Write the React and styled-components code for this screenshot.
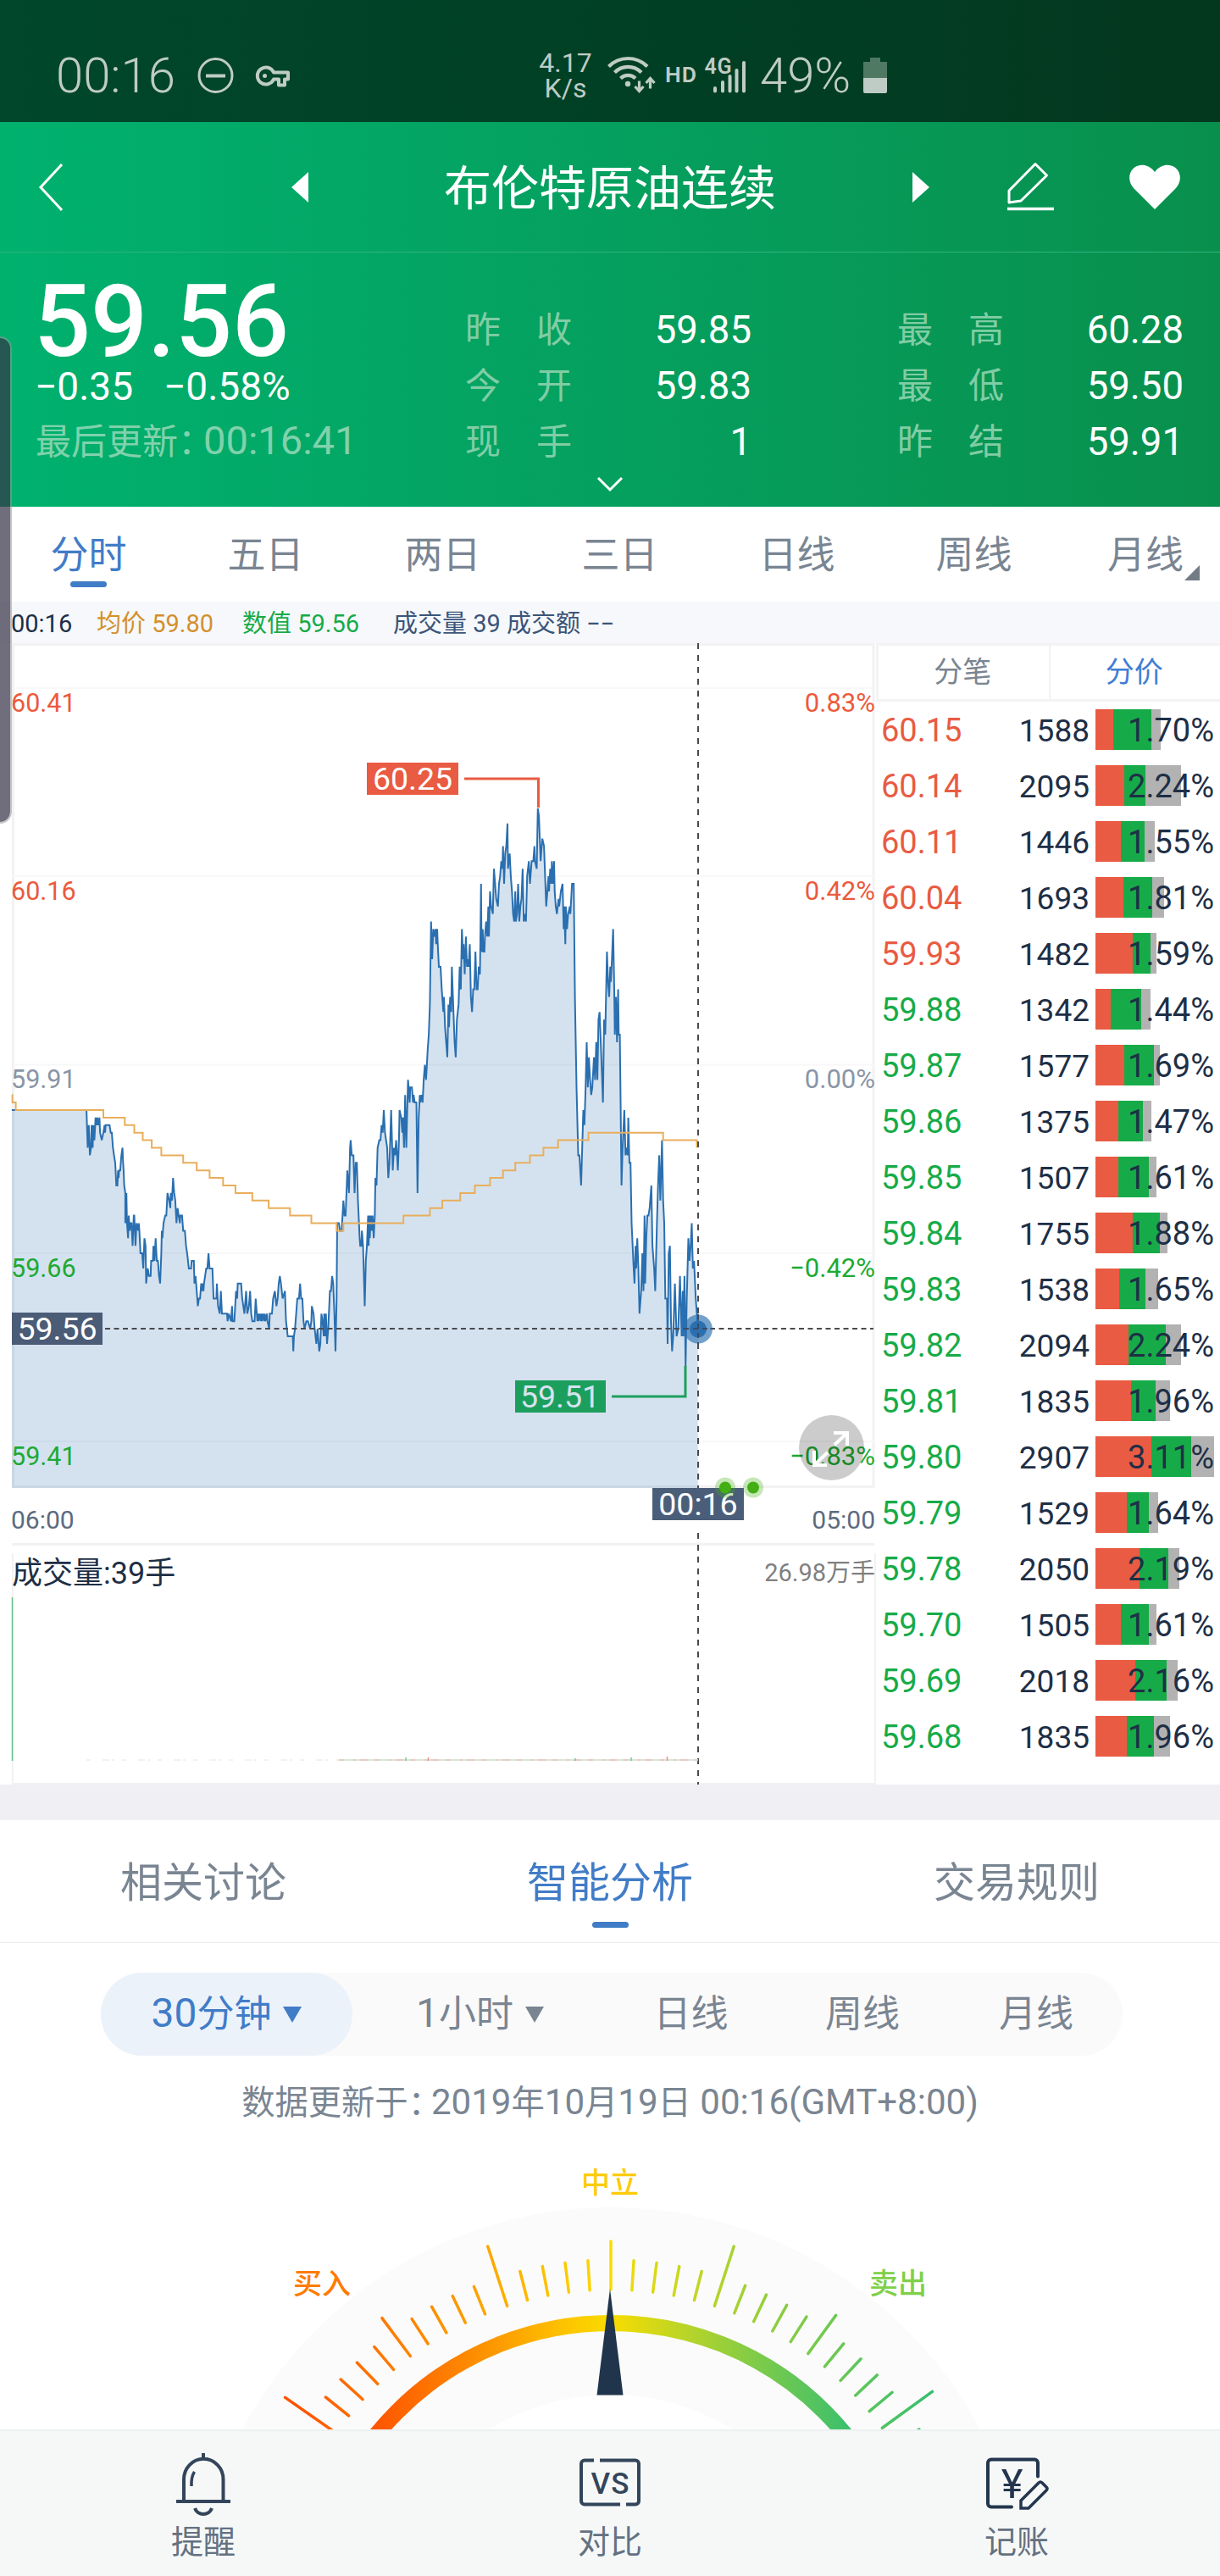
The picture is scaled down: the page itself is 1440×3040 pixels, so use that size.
import React from 'react';
import styled, { createGlobalStyle } from 'styled-components';

const GlobalStyle = createGlobalStyle`
  * {
    box-sizing: border-box;
  }
  body {
    margin: 0;
    background: #ffffff;
    font-family: Roboto, 'Noto Sans CJK SC', sans-serif;
    font-weight: 370;
  }
  svg {
    display: block;
  }
`;

const BLUE = '#417cc7';
const GREY = '#7a8592';
const RED = '#e95b42';
const GREEN = '#16ab48';
const NAVY = '#1e2f46';

const Screen = styled.div`
  position: relative;
  width: 1440px;
  height: 3040px;
  overflow: hidden;
  background: #ffffff;
`;

/* digits stand a little taller than the Chinese text beside them */
const Num = styled.span`
  font-size: ${(p) => p.$scale || 1.09}em;
  line-height: 1;
`;

const Colon = styled.span`
  margin-right: -12px;
`;

/* ---------- status bar ---------- */

const StatusBar = styled.div`
  display: flex;
  align-items: center;
  height: 144px;
  padding: 34px 0 0 66px;
  font-weight: 350;
  color: #bfccc5;
  background: linear-gradient(90deg, #00472c, #013d22 70%, #04371e);
`;

const Clock = styled.div`
  width: 163px;
  font-size: 58px;
  line-height: 60px;
`;

const StatusLeft = styled.div`
  width: 402px;
`;

const Speed = styled.div`
  width: 74px;
  padding-right: 1px;
  font-size: 32px;
  line-height: 30px;
  font-weight: 400;
  text-align: center;
`;

const SpeedLine = styled.div`
  height: 30px;
`;

const StatusRight = styled.div`
  display: flex;
  align-items: center;
`;

const Battery = styled.div`
  width: 122px;
  margin-left: 13px;
  font-size: 58px;
  line-height: 60px;
`;

const EdgeHandle = styled.div`
  position: absolute;
  left: -14px;
  top: 397px;
  width: 28px;
  height: 575px;
  border: 2px solid rgba(150, 150, 150, 0.55);
  border-radius: 16px;
  background: rgba(53, 51, 70, 0.71);
  background-clip: padding-box;
`;

/* ---------- green header ---------- */

const Header = styled.div`
  height: 454px;
  color: #ffffff;
  background: linear-gradient(90deg, #00b16e, #04a463 38%, #089250 92%, #098f4c);
`;

const TitleBar = styled.div`
  display: grid;
  grid-template-columns: 301px 60px 673px 111px 145px 107px;
  align-items: center;
  height: 154px;
  padding-left: 43px;
  border-bottom: 1px solid #2fb37b;
`;

const Title = styled.div`
  padding: 4px 41px 0 0;
  font-size: 56px;
  line-height: 80px;
  text-align: center;
`;

const Quote = styled.div`
  display: flex;
  height: 256px;
  padding: 28px 43px 0;
`;

const QuoteMain = styled.div`
  width: 506px;
`;

const Price = styled.div`
  height: 98px;
  padding-top: 5px;
  margin-left: -3px;
  font-size: 118px;
  line-height: 98px;
  font-weight: 500;
`;

const Change = styled.div`
  display: flex;
  gap: 36px;
  margin-left: -2px;
  font-size: 46px;
  line-height: 65px;
`;

const Updated = styled.div`
  margin-left: -1px;
  font-size: 42px;
  line-height: 66px;
  color: #80d2ac;
`;

const Stats = styled.div`
  width: 338px;
  padding-top: 31px;
  margin-right: ${(p) => (p.$last ? 0 : '172px')};
`;

const Stat = styled.div`
  display: flex;
  justify-content: space-between;
  height: 66px;
  font-size: 45.5px;
  line-height: 66px;
`;

const StatLabel = styled.span`
  display: flex;
  gap: 42px;
  font-size: 42px;
  color: #80cda5;
`;

const Expander = styled.div`
  display: flex;
  justify-content: center;
  padding-top: 8px;
`;

/* ---------- period tabs ---------- */

const Tabs = styled.div`
  display: flex;
  height: 112px;
  overflow: hidden;
  background: #ffffff;
`;

const Tab = styled.div`
  display: flex;
  flex: none;
  flex-direction: column;
  align-items: center;
  width: ${(p) => p.$w || 209}px;
  padding-top: 28px;
  font-size: 45px;
  line-height: 60px;
  color: ${(p) => (p.$active ? BLUE : GREY)};
  font-weight: ${(p) => (p.$active ? 400 : 370)};
`;

const Underline = styled.div`
  width: 43px;
  height: 7px;
  margin-top: ${(p) => p.$gap || 0}px;
  border-radius: 4px;
  background: ${BLUE};
`;

const MoreLabel = styled.span`
  position: relative;

  &:after {
    content: '';
    position: absolute;
    right: -19px;
    bottom: 1px;
    border-left: 18px solid transparent;
    border-bottom: 18px solid #737b84;
  }
`;

const InfoBar = styled.div`
  display: flex;
  height: 49px;
  padding-left: 13px;
  font-size: 29px;
  line-height: 52px;
  white-space: pre;
  background: #f6f8fb;
`;

const Info = styled.span`
  width: ${(p) => p.$w}px;
  color: ${(p) => p.$color};
`;

/* ---------- chart and price list ---------- */

const Market = styled.div`
  display: grid;
  grid-template-columns: 1034px 1fr;
  height: 1347px;
`;

const PriceHead = styled.div`
  display: flex;
  height: 69px;
  border: 3px solid #f3f3f3;
  border-right: none;
`;

const PriceTab = styled.div`
  flex: 1;
  padding-right: 2px;
  font-size: 34px;
  line-height: 63px;
  text-align: center;
  color: ${(p) => (p.$active ? '#3f7ed4' : GREY)};
  border-left: ${(p) => (p.$active ? '2px solid #f3f3f3' : 'none')};
`;

const Row = styled.div`
  display: grid;
  grid-template-columns: 120px 126px 7px 140px;
  align-items: center;
  height: 66px;
  padding-left: 6px;
  font-size: 38px;
  font-weight: 390;
  color: ${NAVY};
`;

const RowPrice = styled.span`
  padding-top: 2px;
  color: ${(p) => (p.$up ? RED : GREEN)};
`;

const RowVolume = styled.span`
  padding-top: 2px;
  font-size: 37px;
  text-align: right;
`;

const Bar = styled.div`
  display: flex;
  grid-column: 4;
  height: 48px;
  position: relative;
`;

const Segment = styled.div`
  background: ${(p) => p.$color};
`;

const Percent = styled.span`
  position: absolute;
  right: 0;
  top: 0;
  line-height: 51px;
`;

const Divider = styled.div`
  height: 42px;
  background: #efeff4;
`;

/* ---------- analysis ---------- */

const SectionTabs = styled.div`
  display: flex;
  height: 145px;
  border-bottom: 1px solid #ececee;
`;

const SectionTab = styled.div`
  display: flex;
  flex: 1;
  flex-direction: column;
  align-items: center;
  padding-top: 40px;
  font-size: 49px;
  line-height: 70px;
  color: ${(p) => (p.$active ? BLUE : GREY)};
  font-weight: ${(p) => (p.$active ? 400 : 370)};
`;

const Pill = styled.div`
  display: flex;
  width: 1206px;
  height: 98px;
  margin: 35px 0 0 119px;
  border-radius: 49px;
  background: #fafafa;
`;

const PillItem = styled.div`
  display: flex;
  align-items: center;
  justify-content: center;
  gap: 14px;
  width: ${(p) => p.$w}px;
  font-size: 44px;
  line-height: 99px;
  border-radius: 49px;
  color: ${(p) => (p.$active ? BLUE : GREY)};
  font-weight: ${(p) => (p.$active ? 400 : 370)};
  background: ${(p) => (p.$active ? '#ebf2fa' : 'transparent')};
`;

const Caret = styled.i`
  border: 11px solid transparent;
  border-top: 19px solid currentColor;
  border-bottom: none;
`;

const Note = styled.div`
  height: 60px;
  margin-top: 25px;
  font-size: 39.3px;
  line-height: 62px;
  text-align: center;
  color: ${GREY};
`;

const GaugeBox = styled.div`
  height: 356px;
  overflow: hidden;
`;

const BottomBar = styled.div`
  display: flex;
  height: 173px;
  border-top: 2px solid #edf1f1;
  background: #f6f8f8;
`;

const Action = styled.div`
  display: flex;
  flex: 1;
  flex-direction: column;
  align-items: center;
  gap: 5px;
  padding-top: 21px;
  font-size: 38px;
  line-height: 50px;
  color: #647180;
`;

/* ---------- data ---------- */

const TABS = ['分时', '五日', '两日', '三日', '日线', '周线'];

const STATS = [
  [['昨收', '59.85'], ['今开', '59.83'], ['现手', '1']],
  [['最高', '60.28'], ['最低', '59.50'], ['昨结', '59.91']],
];

// price, volume, buy width, sell end, total width, share
const PRICES = [
  ['60.15', 1588, 21, 66, 77, '1.70%'],
  ['60.14', 2095, 34, 59, 101, '2.24%'],
  ['60.11', 1446, 30, 58, 70, '1.55%'],
  ['60.04', 1693, 33, 67, 81, '1.81%'],
  ['59.93', 1482, 44, 65, 72, '1.59%'],
  ['59.88', 1342, 18, 54, 65, '1.44%'],
  ['59.87', 1577, 34, 69, 76, '1.69%'],
  ['59.86', 1375, 27, 56, 66, '1.47%'],
  ['59.85', 1507, 27, 63, 72, '1.61%'],
  ['59.84', 1755, 44, 76, 85, '1.88%'],
  ['59.83', 1538, 28, 59, 74, '1.65%'],
  ['59.82', 2094, 39, 83, 101, '2.24%'],
  ['59.81', 1835, 42, 71, 88, '1.96%'],
  ['59.80', 2907, 66, 113, 140, '3.11%'],
  ['59.79', 1529, 37, 63, 74, '1.64%'],
  ['59.78', 2050, 52, 86, 99, '2.19%'],
  ['59.70', 1505, 30, 63, 72, '1.61%'],
  ['59.69', 2018, 47, 84, 97, '2.16%'],
  ['59.68', 1835, 37, 69, 88, '1.96%'],
];

// time slot, cents above 59.00
const TICKS = `21 85 154 85 156 80 158 83 160 79 162 80 163 83 165 80 166 83 168 81 170 84 172 83 173 84
175 83 177 84 178 82 181 81 184 82 186 83 187 82 188 83 195 83 197 82 199 82 201 80 203 79 205 78 207 75
209 75 210 77 211 76 212 77 214 77 216 79 218 80 219 78 220 77 221 75 223 74 223 70 225 74 226 70 228 68
229 71 231 69 232 70 234 70 236 67 238 71 239 71 241 67 243 70 246 69 247 70 248 69 250 66 253 66 255 64
257 68 259 67 260 62 263 64 265 63 268 63 269 65 272 65 273 67 275 65 277 68 279 65 281 65 283 63 285 62
287 66 288 69 289 68 291 70 294 71 296 71 298 74 301 73 303 72 304 74 306 73 308 76 310 74 312 73 314 70
316 72 318 71 320 70 321 71 324 71 326 69 329 69 331 67 333 66 336 64 340 64 341 65 345 65 346 62 348 63
350 61 352 59 354 60 356 60 358 62 360 61 361 62 362 61 363 62 365 63 367 64 369 64 371 66 373 64 378 64
380 60 385 60 386 62 388 59 391 58 393 61 395 58 404 58 405 57 407 58 411 57 413 59 414 57 417 57 420 61
422 60 423 62 426 62 429 62 431 60 433 59 435 58 438 61 440 58 443 59 445 61 447 58 449 57 453 57 455 60
458 57 459 58 460 57 462 58 464 57 465 58 466 57 468 58 470 57 471 58 472 57 475 58 476 57 479 56 480 58
484 58 486 60 489 61 492 59 494 60 496 62 498 63 500 62 503 60 507 61 509 57 512 55 521 55 522 53 523 55
525 56 527 58 529 60 532 60 534 62 536 60 538 60 540 57 542 56 545 57 548 57 552 56 554 57 555 59 558 58
560 56 563 54 565 56 568 53 570 54 572 58 574 57 576 55 577 58 579 55 580 58 582 54 584 56 587 61 589 61
591 63 593 62 595 58 597 53 599 60 600 70 603 70 605 69 608 69 611 73 613 71 615 71 617 75 618 77 621 74
623 80 624 81 626 79 629 79 631 74 633 78 635 78 637 73 640 68 641 67 643 67 644 69 646 67 649 59 651 65
653 67 655 71 656 67 657 71 658 68 660 71 662 69 663 71 665 68 667 71 668 76 670 75 672 80 675 81 677 81
679 83 681 82 683 85 685 82 687 81 689 80 691 76 693 78 696 85 699 77 701 80 703 79 705 81 708 77 710 81
711 85 714 84 716 82 717 84 719 80 721 87 723 80 725 86 726 89 729 86 730 88 733 88 735 86 736 87 738 86
741 86 743 74 745 84 747 87 748 86 750 87 752 86 754 89 756 91 758 89 759 90 761 93 763 95 765 99 767 110
769 105 771 109 773 108 775 109 776 107 778 109 779 107 781 104 784 104 786 101 789 98 790 100 792 96
796 92 798 99 799 96 801 100 803 98 804 104 806 100 808 96 809 94 811 92 813 97 816 99 818 104 820 101
822 109 824 105 825 107 827 103 829 108 831 104 832 105 834 104 836 107 838 100 840 98 842 101 844 101
846 106 848 101 850 101 852 104 854 103 856 115 857 106 859 109 860 106 862 106 863 108 865 110 867 108
869 112 870 108 872 114 874 112 877 111 879 117 881 115 883 113 886 112 888 115 890 116 892 118 894 117
895 120 897 115 899 119 901 120 903 123 904 117 907 119 909 116 911 114 913 111 915 110 917 114 918 110
920 111 922 115 924 110 926 112 928 113 930 117 932 110 934 111 936 110 938 116 941 118 943 115 946 118
949 118 951 120 952 118 955 117 957 125 959 124 962 118 965 121 968 120 970 116 972 112 974 114 976 116
977 114 979 117 981 115 982 118 984 115 986 118 987 114 989 112 991 111 994 113 995 112 998 114 1001 115
1003 109 1004 112 1006 107 1007 112 1009 109 1011 111 1014 112 1015 111 1018 115 1021 115 1023 100
1026 88 1029 79 1031 79 1034 75 1036 80 1038 85 1040 83 1042 88 1044 94 1046 88 1048 92 1050 89 1052 87
1054 88 1057 92 1059 89 1061 94 1063 89 1065 97 1067 98 1069 94 1071 90 1073 86 1075 97 1077 95 1080 106
1082 102 1084 100 1086 104 1087 102 1089 105 1091 109 1093 101 1094 95 1096 100 1098 94 1100 101 1101 95
1103 95 1104 88 1106 75 1108 80 1111 85 1113 79 1115 80 1117 79 1118 84 1120 78 1122 78 1124 70 1127 65
1129 62 1131 67 1132 64 1134 68 1136 64 1138 58 1141 61 1143 66 1145 61 1147 71 1148 62 1150 68 1152 71
1154 71 1156 72 1159 75 1161 67 1164 64 1166 61 1169 70 1171 75 1173 79 1175 73 1178 81 1180 73 1182 70
1184 60 1187 60 1188 54 1190 66 1192 67 1194 57 1196 53 1198 55 1201 62 1204 55 1207 56 1210 63 1213 55
1215 61 1216 55 1218 63 1220 51 1222 60 1225 68 1227 65 1229 67 1231 70 1233 64 1235 65 1238 60 1240 58
1242 56`;

// the average only moves one cent at a time: slot where it reaches the value
const AVERAGE = `21 87 22 86 28 85 184 84 222 83 239 82 254 81 270 80 287 79 326 78 350 77 373 76 397 75
419 74 449 73 478 72 516 71 554 70 599 69 611 70 718 71 765 72 787 73 819 74 845 75 872 76 895 77 917 78
943 79 967 80 993 81 1047 82 1180 81 1240 80`;

const AXIS = [
  [53, '60.41', '0.83%', '#ec5a3c'],
  [275, '60.16', '0.42%', '#ec5a3c'],
  [497.5, '59.91', '0.00%', '#8a95a6'],
  [720, '59.66', '−0.42%', '#1daa32'],
  [942, '59.41', '−0.83%', '#1daa32'],
];

const pairs = (text) => {
  const n = text.split(/\s+/).map(Number);
  return n.filter((_, i) => i % 2 === 0).map((x, i) => [x, n[i * 2 + 1]]);
};

const px = (slot) => (slot * 0.6633).toFixed(1);
const py = (cents) => (551 + (85 - cents) * 8.9).toFixed(1);

const priceLine = pairs(TICKS).map(([s, c]) => `${px(s)},${py(c)}`).join(' L');
const averageLine = pairs(AVERAGE)
  .map(([s, c], i) => (i ? `H${px(s)} V${py(c)}` : `M${px(s)},${py(c)}`))
  .join(' ');

/* ---------- icons ---------- */

const StatusIcons = () => (
  <svg width="114" height="60" viewBox="229 57 114 60" fill="none" stroke="#bfccc5">
    <circle cx="254.5" cy="87" r="19.5" strokeWidth="3" />
    <path d="M243 87.5h23" strokeWidth="4" />
    <path
      d="M323 83.500h17v8h-4v7h-7v-7h-6a10 10 0 1 1 0-8z"
      strokeWidth="4"
      strokeLinejoin="round"
    />
    <circle cx="312.500" cy="87.500" r="2.500" fill="#bfccc5" stroke="none" />
  </svg>
);

const SignalIcons = () => (
  <svg width="179" height="60" viewBox="705 57 179 60" fill="none" stroke="#bfccc5">
    <g strokeWidth="4.200">
      <path d="M718.500 76.500a32 32 0 0 1 45.500 0" />
      <path d="M725.500 83.500a22 22 0 0 1 31.500 0" />
      <path d="M732.500 90.500a12.500 12.500 0 0 1 17.500 0" />
    </g>
    <circle cx="741" cy="97" r="3.200" fill="#bfccc5" stroke="none" />
    <path d="M754.500 93.500v11M749.500 100l5 5.500 5-5.500M767.500 102.500v-11M762.500 96l5-5.500 5 5.500" strokeWidth="3.200" />
    <g fill="#bfccc5" stroke="none" fontFamily="Roboto" fontWeight="600">
      <text x="785" y="94.500" fontSize="26.500" textLength="37">HD</text>
      <text x="831.500" y="84.500" fontSize="25" textLength="32">4G</text>
      <rect x="842" y="100" width="4" height="7.500" rx="2" />
      <rect x="851" y="93" width="4" height="14.500" rx="2" />
      <rect x="859.500" y="86" width="4" height="21.500" rx="2" />
      <rect x="867.500" y="79" width="4" height="28.500" rx="2" />
      <rect x="876" y="70" width="4" height="37.500" rx="2" />
    </g>
  </svg>
);

const BatteryIcon = () => (
  <svg width="28" height="44" viewBox="0 0 28 44">
    <path d="M8 6V1h12v5h8v20H0V6z" fill="#4f7963" />
    <path d="M0 25h28v16a2 2 0 0 1-2 2H2a2 2 0 0 1-2-2z" fill="#bfccc5" />
  </svg>
);

const BackIcon = () => (
  <svg width="32" height="60" viewBox="0 0 32 60" fill="none" stroke="#fff" strokeWidth="3">
    <path d="M30 3L5 30l25 27" />
  </svg>
);

const PrevIcon = () => (
  <svg width="20" height="36" viewBox="0 0 20 36">
    <path d="M20 0v36L0 18z" fill="#fff" />
  </svg>
);

const NextIcon = () => (
  <svg width="20" height="36" viewBox="0 0 20 36">
    <path d="M0 0v36l20-18z" fill="#fff" />
  </svg>
);

const PencilIcon = () => (
  <svg width="60" height="60" viewBox="0 0 60 60" fill="none" stroke="#fff" strokeWidth="3">
    <path d="M3 34L34 2.500L47.500 16L17 46L3 48z" strokeLinejoin="round" />
    <path d="M1 55.500h55" strokeWidth="3.500" />
  </svg>
);

const HeartIcon = () => (
  <svg width="60" height="54" viewBox="0 0 60 54">
    <path
      d="M30 53L5 28C-2 20-1 10 5 4.500C12-1.500 23-.500 30 9C37-.500 48-1.500 55 4.500C61 10 62 20 55 28z"
      fill="#fff"
    />
  </svg>
);

const BellIcon = () => (
  <svg width="74" height="80" viewBox="203 2890 74 80" fill="none" stroke="#33455a" strokeWidth="4">
    <path d="M240 2895v6M217 2951v-25a23 24 0 0 1 46.500 0v25" />
    <path d="M208 2952h64M230 2960a10.500 10 0 0 0 20 0" />
    <path d="M229.500 2917q-4 6-3.500 17" strokeWidth="3.500" />
  </svg>
);

const VersusIcon = () => (
  <svg width="80" height="80" viewBox="680 2890 80 80" fill="none" stroke="#33455a" strokeWidth="4">
    <path d="M701 2903.500h-11a4 4 0 0 0-4 4v44a4 4 0 0 0 4 4h42M708 2903.500h42a4 4 0 0 1 4 4v44a4 4 0 0 1-4 4h-11" />
    <text
      x="697.500"
      y="2943"
      fontFamily="Roboto"
      fontSize="35"
      fontWeight="500"
      fill="#33455a"
      stroke="none"
      textLength="45"
    >
      VS
    </text>
  </svg>
);

const LedgerIcon = () => (
  <svg width="84" height="80" viewBox="1158 2890 84 80" fill="none" stroke="#23364e" strokeWidth="4" strokeLinecap="round">
    <path d="M1194 2958.500h-24a4 4 0 0 1-4-4v-48a4 4 0 0 1 4-4h51a4 4 0 0 1 4 4v16" />
    <path d="M1205 2960v-9l21-21q2-2 4 0l5 5q2 2 0 4l-21 21z" strokeWidth="3.500" />
    <text x="1194.500" y="2948" fontFamily="Roboto" fontSize="49" fontWeight="430" fill="#23364e" stroke="none" textAnchor="middle">
      ¥
    </text>
  </svg>
);

/* ---------- chart ---------- */

const Chart = () => (
  <svg width="1034" height="1347" viewBox="0 0 1034 1347" fontFamily="Roboto, 'Noto Sans CJK SC', sans-serif">
    <g fill="none" stroke="#f2f2f2" strokeWidth="3">
      <path d="M15.500 995.500V1.500H1031V995.500z" />
      <path d="M14 1063.500H1032" />
      <path d="M15 1074V1346H1033V1074" strokeWidth="2" />
    </g>
    {AXIS.map(([y]) => (
      <path key={y} d={`M15 ${y}H1032`} stroke="#f8f8f9" strokeWidth="2" />
    ))}

    <path d={`M14,997 L14,551 L${priceLine} V997z`} fill="#2a6fb0" fillOpacity="0.2" />
    <path d={`M${priceLine}`} fill="none" stroke="#2a6fb0" strokeWidth="2" />
    <path d={averageLine} fill="none" stroke="#e9ae5c" strokeWidth="2" />

    {AXIS.map(([y, left, right, color]) => (
      <g key={left} fill={color} fontSize="30.500">
        <text x="13" y={y + 27.5}>{left}</text>
        <text x="1033" y={y + 27.5} textAnchor="end" fontSize="31">{right}</text>
      </g>
    ))}

    <g fill="none" stroke="#4a4a4e" strokeWidth="2">
      <path d="M824 0V997" strokeDasharray="7 7" />
      <path d="M824 1050V1347" strokeDasharray="7 7" />
      <path d="M124 809H1031" strokeDasharray="6 4.500" />
    </g>

    <path d="M548 160H635.500V194" fill="none" stroke={RED} strokeWidth="3" />
    <rect x="433" y="141" width="108" height="38" fill={RED} />
    <path d="M722 889H809V853" fill="none" stroke="#1c9f5d" strokeWidth="3" />
    <rect x="608" y="870" width="107" height="38" fill="#1c9f5d" />
    <rect x="14" y="790" width="107" height="38" fill="#4b5c77" />
    <rect x="770" y="997" width="108" height="38" fill="#4b5e79" />
    <g fontSize="37.500" textAnchor="middle" fill="#fff">
      <text x="487" y="173">60.25</text>
      <text x="661" y="902" fill="#d5e3ee">59.51</text>
      <text x="67.500" y="822">59.56</text>
      <text x="824" y="1029">00:16</text>
    </g>

    <circle cx="824" cy="809.500" r="17" fill="#2a6fb0" fillOpacity="0.65" />
    <circle cx="824" cy="809.500" r="10" fill="#2a6fb0" />
    <path d="M824 792V828M807 809H841" stroke="#3c4c60" strokeWidth="2" strokeDasharray="6 5" />

    {[856, 889].map((x) => (
      <g key={x} fill="#43af14">
        <circle cx={x} cy="996.500" r="12" fillOpacity="0.3" />
        <circle cx={x} cy="996.500" r="7" />
      </g>
    ))}

    <circle cx="981.500" cy="949.500" r="38.500" fill="#000" fillOpacity="0.2" />
    <path
      d="M985 946L999 933M984 932H1000V947M977 955L962 969M961 953V970H976"
      fill="none"
      stroke="#fff"
      strokeWidth="4"
    />

    <g fill="#5c6b80" fontSize="30">
      <text x="13" y="1045">06:00</text>
      <text x="1033" y="1045" textAnchor="end">05:00</text>
    </g>
    <text x="14" y="1110" fontSize="36" fill={NAVY}>成交量:39手</text>
    <text x="1033" y="1107" fontSize="29" fill="#808080" textAnchor="end">26.98万手</text>

    <path d="M14.500 1126V1319" stroke="#5fc389" strokeWidth="1.500" />
    <path d="M102 1318H400" stroke="#e4e4e4" strokeWidth="1" strokeDasharray="5 14 8 3 3 9" />
    <path d="M400 1318H824" stroke="#cfdccc" strokeWidth="1.500" />
    <path d="M400 1318H824" stroke="#eac3be" strokeWidth="1.500" strokeDasharray="6 11 3 5 9 8" />
    <path d="M505.500 1319v-4M787.500 1319v-5" stroke="#ef8a7e" strokeWidth="1.500" />
    <path d="M479 1319v-4M679 1319v-3M745 1319v-4" stroke="#6ecb94" strokeWidth="1.500" />
  </svg>
);

/* ---------- gauge ---------- */

const TICK_END = [453, 470, 452, 469];
const DIAL = Array.from({ length: 33 }, (_, i) => i - 16);

const stops = (
  <>
    <stop offset="0" stopColor="#ff5200" />
    <stop offset="0.240" stopColor="#fd9400" />
    <stop offset="0.420" stopColor="#fdc800" />
    <stop offset="0.500" stopColor="#f9dc00" />
    <stop offset="0.630" stopColor="#c3d622" />
    <stop offset="0.790" stopColor="#83cc46" />
    <stop offset="1" stopColor="#39bf6e" />
  </>
);

const Gauge = () => (
  <svg width="1440" height="356" viewBox="0 2511 1440 356">
    <defs>
      <linearGradient id="arc" gradientUnits="userSpaceOnUse" x1="437" x2="1005" y1="0" y2="0">
        {stops}
      </linearGradient>
      <linearGradient id="dial" gradientUnits="userSpaceOnUse" x1="350" x2="1092" y1="0" y2="0">
        {stops}
      </linearGradient>
    </defs>
    <circle cx="721.500" cy="3098" r="493" fill="#fbfbfb" />
    <circle cx="721" cy="3098" r="272" fill="#ffffff" />
    <circle cx="721" cy="3098" r="356.500" fill="none" stroke="url(#arc)" strokeWidth="19" />
    {DIAL.map((i) => {
      const step = i < -5 ? 3.67 : 3.6;
      const a = (i * step * Math.PI) / 180;
      const end = i % 5 ? 431 : TICK_END[Math.abs(i / 5)];
      return (
        <path
          key={i}
          d={`M${721 + 396 * Math.sin(a)} ${3098 - 396 * Math.cos(a)}L${721.01 + end * Math.sin(a)} ${3098 - end * Math.cos(a)}`}
          stroke="url(#dial)"
          strokeWidth="3.500"
          strokeLinecap="round"
        />
      );
    })}
    <path d="M720 2701L735.500 2826.500H704.500z" fill="#20344b" />
    <g fontFamily="'Noto Sans CJK SC', sans-serif" fontSize="34" fontWeight="500" textAnchor="middle">
      <text x="720" y="2588" fill="#fdcb0b">中立</text>
      <text x="380" y="2707" fill="#ff7b00">买入</text>
      <text x="1060" y="2707" fill="#7ed048">卖出</text>
    </g>
  </svg>
);

const App = () => {
  return (
    <Screen>
      <GlobalStyle />
      <StatusBar>
        <Clock>00:16</Clock>
        <StatusLeft>
          <StatusIcons />
        </StatusLeft>
        <Speed>
          <SpeedLine>4.17</SpeedLine>
          <SpeedLine>K/s</SpeedLine>
        </Speed>
        <StatusRight>
          <SignalIcons />
          <Battery>49%</Battery>
          <BatteryIcon />
        </StatusRight>
      </StatusBar>

      <Header>
        <TitleBar>
          <BackIcon />
          <PrevIcon />
          <Title>布伦特原油连续</Title>
          <NextIcon />
          <PencilIcon />
          <HeartIcon />
        </TitleBar>
        <Quote>
          <QuoteMain>
            <Price>59.56</Price>
            <Change>
              <span>−0.35</span>
              <span>−0.58%</span>
            </Change>
            <Updated>
              最后更新<Colon>：</Colon>
              <Num $scale={1.12}>00:16:41</Num>
            </Updated>
          </QuoteMain>
          {STATS.map((column, i) => (
            <Stats key={i} $last={i === 1}>
              {column.map(([label, value]) => (
                <Stat key={label}>
                  <StatLabel>
                    <span>{label[0]}</span>
                    <span>{label[1]}</span>
                  </StatLabel>
                  {value}
                </Stat>
              ))}
            </Stats>
          ))}
        </Quote>
        <Expander>
          <svg width="32" height="20" viewBox="0 0 32 20" fill="none" stroke="#fff" strokeWidth="3">
            <path d="M2 2l14 14L30 2" />
          </svg>
        </Expander>
      </Header>

      <Tabs>
        {TABS.map((name, i) => (
          <Tab key={name} $active={i === 0}>
            {name}
            {i === 0 && <Underline />}
          </Tab>
        ))}
        <Tab $w={196}>
          <MoreLabel>月线</MoreLabel>
        </Tab>
      </Tabs>
      <InfoBar>
        <Info $w={101} $color={NAVY}>00:16</Info>
        <Info $w={172} $color="#d48f2b">均价 59.80</Info>
        <Info $w={178} $color={GREEN}>数值 59.56</Info>
        <Info $w={300} $color="#3b5478">成交量 39 成交额 −−</Info>
      </InfoBar>

      <Market>
        <Chart />
        <div>
          <PriceHead>
            <PriceTab>分笔</PriceTab>
            <PriceTab $active>分价</PriceTab>
          </PriceHead>
          {PRICES.map(([price, volume, buy, sell, total, share]) => (
            <Row key={price}>
              <RowPrice $up={Number(price) > 59.91}>{price}</RowPrice>
              <RowVolume>{volume}</RowVolume>
              <Bar>
                <Segment $color={RED} style={{ width: buy }} />
                <Segment $color={GREEN} style={{ width: sell - buy }} />
                <Segment $color="#b2b2b2" style={{ width: total - sell }} />
                <Percent>{share}</Percent>
              </Bar>
            </Row>
          ))}
        </div>
      </Market>
      <Divider />

      <SectionTabs>
        <SectionTab>相关讨论</SectionTab>
        <SectionTab $active>
          智能分析
          <Underline $gap={10} />
        </SectionTab>
        <SectionTab>交易规则</SectionTab>
      </SectionTabs>
      <Pill>
        <PillItem $w={297} $active>
          <span>
            <Num>30</Num>分钟
          </span>
          <Caret />
        </PillItem>
        <PillItem $w={301}>
          <span>
            <Num>1</Num>小时
          </span>
          <Caret />
        </PillItem>
        <PillItem $w={197}>日线</PillItem>
        <PillItem $w={208}>周线</PillItem>
        <PillItem $w={202}>月线</PillItem>
      </Pill>
      <Note>
        数据更新于<Colon>：</Colon>
        <Num $scale={1.07}>2019</Num>年<Num $scale={1.07}>10</Num>月<Num $scale={1.07}>19</Num>日
        <Num $scale={1.07}> 00:16(GMT+8:00)</Num>
      </Note>
      <GaugeBox>
        <Gauge />
      </GaugeBox>

      <BottomBar>
        <Action>
          <BellIcon />
          提醒
        </Action>
        <Action>
          <VersusIcon />
          对比
        </Action>
        <Action>
          <LedgerIcon />
          记账
        </Action>
      </BottomBar>
      <EdgeHandle />
    </Screen>
  );
};

export default App;
